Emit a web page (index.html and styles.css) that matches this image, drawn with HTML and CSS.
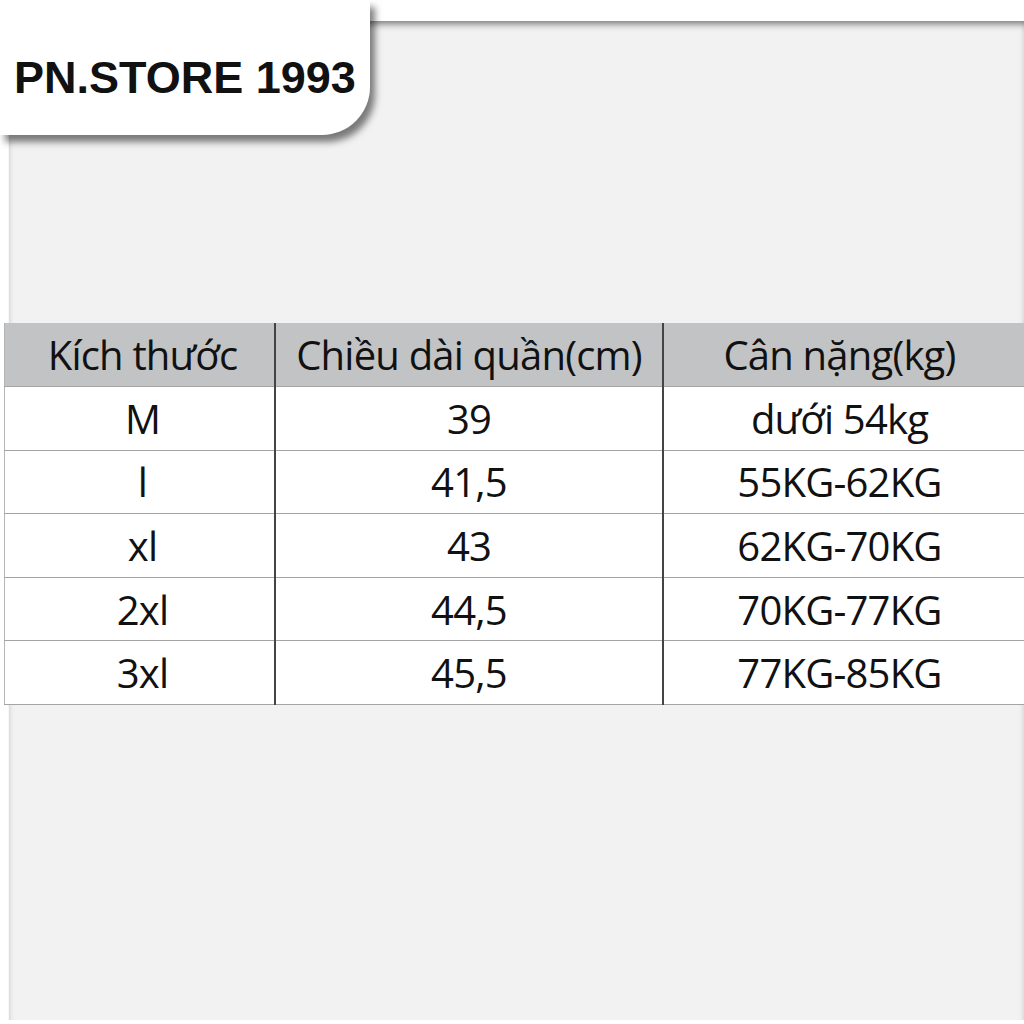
FILE: index.html
```html
<!DOCTYPE html>
<html lang="vi">
<head>
<meta charset="utf-8">
<title>PN.STORE 1993</title>
<link rel="stylesheet" href="styles.css">
</head>
<body>
<div class="tab">PN.STORE 1993</div>
<div class="panel">
  <table class="sizes">
    <thead>
      <tr><th class="c1">Kích thước</th><th class="c2">Chiều dài quần(cm)</th><th class="c3">Cân nặng(kg)</th></tr>
    </thead>
    <tbody>
      <tr><td class="c1">M</td><td class="c2">39</td><td class="c3">dưới 54kg</td></tr>
      <tr><td class="c1">l</td><td class="c2">41,5</td><td class="c3">55KG-62KG</td></tr>
      <tr><td class="c1">xl</td><td class="c2">43</td><td class="c3">62KG-70KG</td></tr>
      <tr><td class="c1">2xl</td><td class="c2">44,5</td><td class="c3">70KG-77KG</td></tr>
      <tr><td class="c1">3xl</td><td class="c2">45,5</td><td class="c3">77KG-85KG</td></tr>
    </tbody>
  </table>
</div>
</body>
</html>
```
FILE: styles.css
```css
html, body {
  margin: 0;
  padding: 0;
}
body {
  width: 1024px;
  height: 1024px;
  background: #ffffff;
  overflow: hidden;
  position: relative;
}
.tab {
  position: absolute;
  left: 0;
  top: 0;
  width: 356px;
  height: 80px;
  padding: 55px 0 0 14px;
  background: #ffffff;
  border-bottom-right-radius: 48px;
  box-shadow: 5px 7px 7px rgba(0, 0, 0, 0.5);
  font-family: "Liberation Sans", Arial, sans-serif;
  font-weight: bold;
  font-size: 45px;
  line-height: 45px;
  color: #111111;
  white-space: nowrap;
  z-index: 2;
}
.panel {
  margin: 21px 0 0 8px;
  height: 697px;
  padding-top: 302px;
  background: #f2f2f2;
  border-left: 1px solid #f8f8f8;
  box-shadow: inset 0 6px 7px -3px rgba(0, 0, 0, 0.5);
}
.sizes {
  margin-left: -5px;
  width: 1021px;
  border-collapse: collapse;
  table-layout: fixed;
  font-family: "Open Sans", "Noto Sans", sans-serif;
  font-size: 40px;
  letter-spacing: -0.8px;
  color: #111111;
  border-left: 1px solid #b5b5b5;
}
.sizes th, .sizes td {
  padding: 0;
  text-align: center;
  font-weight: normal;
  border-bottom: 1px solid #a4a4a4;
  white-space: nowrap;
}
.sizes th {
  height: 63px;
  background: #c2c3c5;
}
.sizes td {
  height: 62.6px;
  background: #ffffff;
}
.sizes .c1 { width: 269px; text-indent: 6px; }
.sizes .c2 { width: 386px; border-left: 2px solid #444444; }
.sizes .c3 { border-left: 2px solid #444444; padding-right: 10px; }
```
